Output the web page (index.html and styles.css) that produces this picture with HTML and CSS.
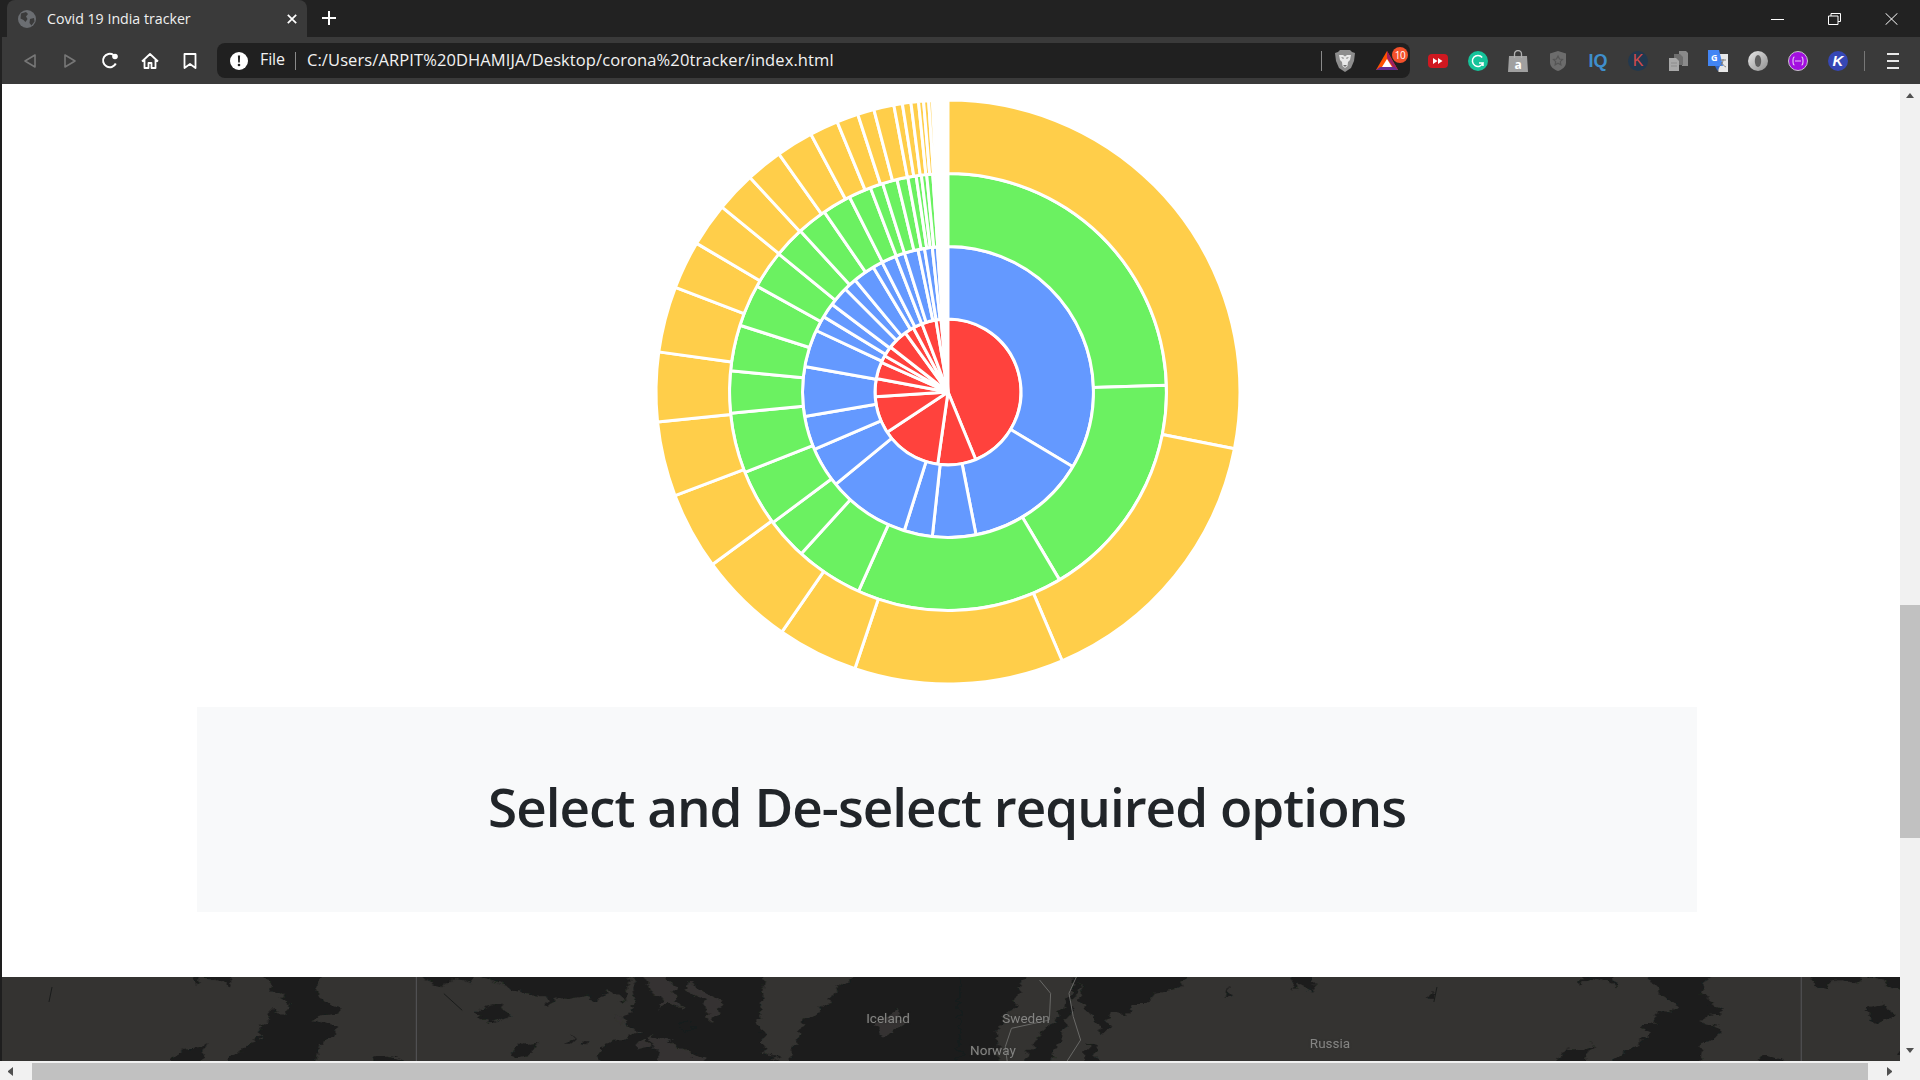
FILE: index.html
```html
<!DOCTYPE html>
<html lang="en">
<head>
<meta charset="utf-8">
<title>Covid 19 India tracker</title>
<link rel="stylesheet" href="styles.css">
</head>
<body>
<header class="chrome">
  <div class="tabstrip">
    <div class="tab">
      <svg class="favicon" viewBox="0 0 18 18"><circle cx="9" cy="9" r="9" fill="#6b6e72"/><path d="M3 3.5 8 2l2 2-2 2.5 1.5 2.5-2 3-2-2-3-1.5zM12 9l4-1 .5 3.5-3 4-2-2.5z" fill="#3b3b3b"/></svg>
      <span class="tab-title">Covid 19 India tracker</span>
      <svg class="tab-close" viewBox="0 0 10 10"><path d="M.8.8l8.4 8.4M9.2.8.8 9.2" stroke="#fff" stroke-width="1.7"/></svg>
    </div>
    <svg class="newtab" viewBox="0 0 14 14"><path d="M7 0v14M0 7h14" stroke="#fff" stroke-width="2"/></svg>
    <div class="winctl">
      <div class="winbtn"><svg viewBox="0 0 13 12" width="13" height="12"><path d="M0 6.5h13" stroke="#fff"/></svg></div>
      <div class="winbtn"><svg viewBox="0 0 13 12" width="13" height="12"><path d="M.5 3h9.5v8.500H.5zM3 3V.5h9.500V8.500H10" fill="none" stroke="#fff"/></svg></div>
      <div class="winbtn"><svg viewBox="0 0 13 12" width="13" height="12"><path d="M.5.2l12 11.600M12.500.2.500 11.800" stroke="#fff"/></svg></div>
    </div>
  </div>
  <div class="toolbar">
    <div class="nav"><svg viewBox="0 0 20 20" width="20" height="20"><path d="M15 4v12L5 10z" fill="none" stroke="#777" stroke-width="1.600" stroke-linejoin="round"/></svg></div>
    <div class="nav"><svg viewBox="0 0 20 20" width="20" height="20"><path d="M5 4v12l10-6z" fill="none" stroke="#777" stroke-width="1.600" stroke-linejoin="round"/></svg></div>
    <div class="nav"><svg viewBox="0 0 20 20" width="20" height="20"><path d="M15.800 12.500A6.700 6.700 0 1 1 13.500 4" fill="none" stroke="#fff" stroke-width="2"/><circle cx="15" cy="5.500" r="2.800" fill="#fff"/></svg></div>
    <div class="nav"><svg viewBox="0 0 20 20" width="20" height="20"><path d="M2 10.500 10 3l8 7.500M4.500 9v8h4v-5h3v5h4V9" fill="none" stroke="#fff" stroke-width="1.800" stroke-linejoin="round"/></svg></div>
    <div class="nav"><svg viewBox="0 0 20 20" width="20" height="20"><path d="M4.500 3h11v14L10 13l-5.500 4z" fill="none" stroke="#fff" stroke-width="1.800" stroke-linejoin="round"/></svg></div>
    <div class="omnibox">
      <svg class="info" viewBox="0 0 18 18"><circle cx="9" cy="9" r="9" fill="#fff"/><path d="M7.900 3.500h2.200l-.3 7H8.200z" fill="#202020"/><circle cx="9" cy="13" r="1.300" fill="#202020"/></svg>
      <span class="scheme">File</span>
      <span class="omni-sep"></span>
      <span class="url">C:/Users/ARPIT%20DHAMIJA/Desktop/corona%20tracker/index.html</span>
      <div class="omni-end">
        <span class="omni-sep end-sep"></span>
        <svg class="lion" viewBox="0 0 20 24"><path d="M5 1h10l2 2 3 1-1 8-3 7-6 4-6-4-3-7L0 4l3-1z" fill="#8d8d8d"/><path d="M4 6h4l2 1.500L12 6h4l-1 5-2 2-.5 4L10 19l-2.500-2L7 13l-2-2z" fill="#e8e8e8"/><path d="M6 8.500h2.500v1.500zM14 8.500h-2.500v1.500zM8 16h4l-2 2z" fill="#6a6a6a"/></svg>
        <div class="bat">
          <svg viewBox="0 0 24 22" width="24" height="22"><path d="M12 1 1 20h22z" fill="#ff5000"/><path d="M12 1v7l8 12h3z" fill="#9e1f63"/><path d="M1 20l4-3h14l4 3z" fill="#662d91"/><path d="M12 9l5 8H7z" fill="#fff"/></svg>
          <span class="badge">10</span>
        </div>
      </div>
    </div>
    <div class="ext-row">
      <div class="ext"><svg viewBox="0 0 20 16" width="20" height="16"><rect y="1" width="20" height="14" rx="4" fill="#cf1820"/><path d="M5 5l4.500 3L5 11zM10 5l4.500 3L10 11z" fill="#fff"/></svg></div>
      <div class="ext"><svg viewBox="0 0 20 20" width="20" height="20"><circle cx="10" cy="10" r="10" fill="#15c39a"/><path d="M14.200 6.500a5.500 5.500 0 1 0 .8 5.500h-4M15 12v3" fill="none" stroke="#fff" stroke-width="1.500"/></svg></div>
      <div class="ext"><svg viewBox="0 0 20 22" width="20" height="22"><path d="M1 6h18l1 16H0z" fill="#a0a0a0"/><path d="M6.500 8V4a3.500 3.500 0 0 1 7 0v4" fill="none" stroke="#b0b0b0" stroke-width="1.300"/><text x="10" y="19" class="bag-a">a</text></svg></div>
      <div class="ext"><svg viewBox="0 0 16 20" width="16" height="20"><path d="M8 0l8 2.500v9C16 16 12 18.500 8 20c-4-1.500-8-4-8-8.500v-9z" fill="#6c6c6c"/><path d="M8 5l1.500 3 3 .4-2.200 2.200.6 3.200L8 12.300l-2.900 1.500.6-3.200-2.200-2.200 3-.4z" fill="none" stroke="#555" stroke-width="1.200"/></svg></div>
      <div class="ext"><span class="iq">IQ</span></div>
      <div class="ext"><span class="circle-k">K</span></div>
      <div class="ext"><svg viewBox="0 0 20 20" width="20" height="20"><path d="M11 0h7l2 2v13h-6V6l-3-3z" fill="#8a8a8a"/><path d="M6 3h6l3 3v8H6z" fill="#6e6e6e"/><path d="M1 7h7l3 3v10H1z" fill="#a8a8a8"/><path d="M3 12h6M3 15h6" stroke="#8c8c8c"/></svg></div>
      <div class="ext"><svg viewBox="0 0 20 22" width="20" height="22"><path d="M9 4h11v18H10.500z" fill="#e8e8e8"/><path d="M0 0h11l4 16H0z" fill="#4285f4"/><path d="M7 16h5l-2.500 5z" fill="#3367c6"/><text x="3" y="11" class="tr-g">G</text><path d="M12 10h6M15 9v1c0 3-2 5-3 6M13 12c1 2 3 4 5 5" fill="none" stroke="#777" stroke-width=".9"/></svg></div>
      <div class="ext"><svg viewBox="0 0 20 20" width="20" height="20"><defs><linearGradient id="ring" x1="0" y1="0" x2="1" y2="1"><stop offset="0" stop-color="#e8e8e8"/><stop offset="1" stop-color="#8e8e8e"/></linearGradient></defs><circle cx="10" cy="10" r="10" fill="url(#ring)"/><ellipse cx="10" cy="10" rx="3.200" ry="6" fill="#5f5f5f"/></svg></div>
      <div class="ext"><svg viewBox="0 0 20 20" width="20" height="20"><circle cx="10" cy="10" r="9.500" fill="#a30fe0" stroke="#c9c4cc"/><path d="M6.500 6C5 6 5 7.500 5 10s0 4 1.500 4M13.500 6C15 6 15 7.500 15 10s0 4-1.500 4" fill="none" stroke="#e9d0f5" stroke-width="1.100"/><path d="M7.500 10h1M9.500 10h1M11.500 10h1" stroke="#fff" stroke-width="1.400"/></svg></div>
      <div class="ext"><span class="blue-k">K</span></div>
    </div>
    <span class="tool-sep"></span>
    <div class="menu"><span></span><span></span><span></span></div>
  </div>
</header>

<div class="viewport">
  <main class="page">
    <section class="chart-row"><canvas id="sunburst" width="640" height="623"></canvas></section>
    <section class="panel"><h1>Select and De-select required options</h1></section>
    <section class="map">
      <svg class="map-art" viewBox="0 0 3136 252" preserveAspectRatio="none">
        <defs>
          <filter id="coast" filterUnits="userSpaceOnUse" x="-40" y="-40" width="3216" height="332">
            <feTurbulence type="fractalNoise" baseFrequency="0.035 0.05" numOctaves="3" seed="7"/>
            <feDisplacementMap in="SourceGraphic" scale="26" xChannelSelector="R" yChannelSelector="G"/>
          </filter>
          <g id="canada">
            <path class="water" d="M318-30l2 58 10-26 35 12 10 14 10-58zM418-30l32 78 25 32-5 30-25-10-5 40-20 5 10 30-25 30-35 47v30h145v-30l5-52 25-20 5-30-40-20 15-15 20-5 8-15-18-15-20-40 25-70zM280 282v-30l15-33 30-5 15-15-10 40-10 43zM610 282v-30l10-18 30 10 5 8v30zM690-30v30l15 24 15 10 10-20 15-5 25 8 10-47zM790-30v30l60 44 40 15 5 40 10-35 20 5 35-10 15 15 15-35 30 35 10-104zM780 99l35-20 15 40-30 20zM835 240l15-40 30-5-20 40-10 5zM925 200l10-25v25zM950 192l8 16-10-4z"/>
            <path class="water" d="M1030-30l10 109-15 30-5 30 30 25-50 25-20 30-8 63h303v-30l-25-22-10-100 10-160z"/>
            <path class="land" d="M1045-30l20 80 15 10-5 40 20-30 20 30-15-60-20-70zM1125 10l55 70-20 60-10-70-30-30zM1060 170l40 30 55 52v30h-75zM1040 215l15-30 10 20zM1005 115l15 5-10 25z"/>
            <path class="water" d="M1110 140l18-8 5 25-15 5z"/>
          </g>
        </defs>
        <path class="land" d="M0 0h3136v252H0z"/>
        <g filter="url(#coast)">
          <use href="#canada"/>
          <use href="#canada" x="2262"/>
          <path class="water" d="M1290 282v-38l20-105 40-60 15-40 45-69h190v312z"/>
          <path class="water" d="M1568-30h118l-18 49-10 60-30 80 5 123h-65z"/>
          <path class="water" d="M1673 282v-30l22-70 30-50 20-70 10-92h12l-14 120-20 80-20 112zM1758-30h190l-25 66-35 8-20 40h-20l-5 30-30-5-5 50-10 10-30-90zM1773 282v-80l15 10 8 70zM2112-30l-2 55 6 15 5-20 25 25-5-75zM2330 65l8-20 10 5-8 15zM2005 30l5 28-8 5z"/>
          <path class="land" d="M1430 139l35-40 15 40-35 40z"/>
        </g>
        <path class="thin" d="M85 30l-5 45M725 50l30 50M2347 30l-5 45"/>
        <path class="line" d="M680 0v252M2942 0v252"/>
        <path class="border" d="M1698 9l18 40-2 80-62 25-10 55 3 43M1758 0l-12 49 7 70 12 70-22 63"/>
      </svg>
      <span class="map-label l-iceland">Iceland</span>
      <span class="map-label l-sweden">Sweden</span>
      <span class="map-label l-norway">Norway</span>
      <span class="map-label l-russia">Russia</span>
    </section>
  </main>
  <aside class="vscroll">
    <span class="arrow-up"></span>
    <div class="vtrack"><div class="vthumb"></div></div>
    <span class="arrow-down"></span>
  </aside>
</div>
<footer class="hscroll">
  <span class="arrow-left"></span>
  <div class="hthumb"></div>
  <span class="arrow-right"></span>
  <div class="corner"></div>
</footer>
<script src="script.js"></script>
</body>
</html>
```
FILE: styles.css
```css
* { box-sizing: border-box; }
html, body { margin: 0; height: 100%; overflow: hidden; }
body { display: flex; flex-direction: column; width: 1920px; height: 1080px; background: #fff; font-family: "Open Sans", "Noto Sans", sans-serif; }

.chrome { flex: none; background: #222; }
.tabstrip { height: 37px; display: flex; align-items: flex-end; padding-left: 7px; position: relative; }
.tab { width: 300px; height: 37px; background: #3a3a3a; border-radius: 8px 8px 0 0; display: flex; align-items: center; padding: 0 10px 0 11px; }
.favicon { width: 18px; height: 18px; flex: none; }
.tab-title { margin-left: 11px; color: #f0f0f0; font-size: 14.2px; flex: 1; white-space: nowrap; padding-bottom: 1px; }
.tab-close { width: 10px; height: 10px; flex: none; margin-right: 0; }
.newtab { width: 14px; height: 14px; margin: 0 0 12px 15px; flex: none; }
.winctl { margin-left: auto; display: flex; align-self: flex-start; }
.winbtn { width: 57px; height: 37px; display: flex; align-items: center; justify-content: center; }

.toolbar { height: 47px; margin-left: 2px; background: #3a3a3a; display: flex; align-items: center; padding-left: 8px; }
.nav { width: 40px; height: 40px; flex: none; display: flex; align-items: center; justify-content: center; }
.omnibox { width: 1193px; height: 35px; margin-left: 7px; flex: none; background: #202020; border-radius: 8px; display: flex; align-items: center; padding-left: 13px; color: #f2f2f2; }
.info { width: 18px; height: 18px; flex: none; }
.scheme { margin-left: 12px; font-size: 16px; padding-bottom: 3px; letter-spacing: -.1px; }
.omni-sep { width: 1px; height: 18px; background: #8a8a8a; margin: 0 11px 0 10px; flex: none; }
.url { font-size: 16.5px; white-space: nowrap; letter-spacing: .1px; padding-bottom: 3px; }
.omni-end { margin-left: auto; display: flex; align-items: center; width: 92px; flex: none; height: 100%; }
.end-sep { margin: 0 13px 0 3px; height: 20px; }
.lion { width: 20px; height: 24px; flex: none; }
.bat { position: relative; width: 24px; height: 22px; margin-left: 20px; flex: none; }
.badge { position: absolute; left: 17px; top: -3px; width: 16px; height: 16px; border-radius: 50%; background: #f5512b; color: #fff; font-size: 10px; line-height: 16px; text-align: center; letter-spacing: -.4px; }

.ext-row { display: flex; margin-left: 8px; flex: none; }
.ext { width: 40px; height: 40px; display: flex; align-items: center; justify-content: center; flex: none; }
.bag-a { font: 700 12px "Open Sans", sans-serif; fill: #fff; text-anchor: middle; }
.tr-g { font: 700 9px "Open Sans", sans-serif; fill: #fff; }
.iq { color: #3f8fcc; font: 700 18px/1 "Liberation Sans", sans-serif; }
.circle-k { width: 20px; height: 20px; border-radius: 50%; background: #22384e; color: #d04a4c; font: 400 16px/20px "Liberation Sans", sans-serif; text-align: center; }
.blue-k { width: 20px; height: 20px; border-radius: 50%; background: #3647b5; color: #fff; font: italic 700 15px/20px "Liberation Sans", sans-serif; text-align: center; }
.tool-sep { width: 1px; height: 20px; background: #777; margin-left: 6px; flex: none; }
.menu { margin-left: 22px; width: 12px; display: flex; flex-direction: column; gap: 5px; flex: none; }
.menu span { height: 2px; background: #e8e8e8; }

.viewport { flex: 1; min-height: 0; display: flex; }
.page { flex: 1; min-width: 0; border-left: 2px solid #1e1e1e; display: flex; flex-direction: column; align-items: flex-start; }
.chart-row { width: 1500px; margin-left: 195px; display: flex; justify-content: center; flex: none; }
#sunburst { display: block; width: 640px; height: 623px; }
.panel { width: 1500px; height: 205px; margin-left: 195px; padding-bottom: 6px; background: #f8f9fa; display: flex; align-items: center; justify-content: center; flex: none; }
.panel h1 { margin: 0; font-size: 53px; font-weight: 600; color: #212529; line-height: 1.2; letter-spacing: -.98px; white-space: nowrap; }

.map { width: 100%; height: 84px; margin-top: 65px; position: relative; overflow: hidden; flex: none; background: #343331; }
.map-art { display: block; width: 1920px; height: 84px; margin-left: -2px; }
.map-art .land { fill: #343331; }
.map-art .water { fill: #1a1c1b; }
.map-art .line { stroke: #57575a; stroke-width: 1; fill: none; vector-effect: non-scaling-stroke; }
.map-art .border { stroke: #6a6a68; stroke-width: 1; fill: none; vector-effect: non-scaling-stroke; }
.map-art .thin { stroke: #1a1c1b; stroke-width: 1; fill: none; vector-effect: non-scaling-stroke; }
.map-label { position: absolute; transform: translate(-50%, -50%); color: #858583; font: 400 13.5px/1 Roboto, sans-serif; text-shadow: 0 0 2px #333; }
.l-iceland { left: 886px; top: 42px; }
.l-sweden { left: 1024px; top: 42px; }
.l-norway { left: 991px; top: 74px; }
.l-russia { left: 1328px; top: 67px; }

.vscroll { width: 20px; flex: none; background: #f1f1f1; display: flex; flex-direction: column; align-items: center; }
.vtrack { flex: 1; width: 100%; padding-top: 507px; }
.vthumb { height: 233px; background: #c1c1c1; }
.arrow-up { margin: 9px 0 0; border: 4px solid transparent; border-top: 0; border-bottom: 5px solid #505050; }
.arrow-down { margin: 0 0 8px; border: 4px solid transparent; border-bottom: 0; border-top: 5px solid #505050; }

.hscroll { flex: none; height: 19px; background: #f1f1f1; display: flex; align-items: stretch; padding-top: 2px; }
.arrow-left { flex: none; width: 0; height: 9px; margin: 4px 16px 0 8px; border: 4.500px solid transparent; border-left: 0; border-right: 5px solid #505050; }
.hthumb { width: 1836px; background: #c1c1c1; flex: none; margin-left: 3px; }
.arrow-right { flex: none; width: 0; height: 9px; margin: 4px 0 0 19px; border: 4.500px solid transparent; border-right: 0; border-left: 5px solid #505050; }
.corner { flex: 1; }
```
FILE: script.js
```js
var rings = [
  { color: "#ff423d", inner: 0, outer: 73, stops: [157.7,188.1,236.5,266.3,280.7,294,299.8,308,324.2,331.6,339.1,350.5,354.5,356.6] },
  { color: "#6499ff", inner: 73, outer: 145.5, stops: [120.9,168.9,186.2,197.5,230.6,246.8,260.3,280.1,295,301.2,307.1,315.1,320.3,329.1,333.1,338.9,342.6,348.1,350.7,353.8,355.8,356.7] },
  { color: "#6bf161", inner: 145.5, outer: 218.5, stops: [88.2,149.3,204.2,222.2,233.3,248.4,264.4,275.6,287.8,299,309.2,317.5,325.5,333.2,339.2,342.6,346.5,349.4,351.6,353,354.4,356,356.8] },
  { color: "#ffce4a", inner: 218.5, outer: 292, stops: [101.2,157,198.6,214.7,233.8,249.2,264.1,277.9,291,300.6,309.3,317.3,324.6,332,337.7,342,345.3,349.3,351,352.7,354.2,355.2,356.2,356.9] }
];
var canvas = document.getElementById("sunburst");
var ctx = canvas.getContext("2d");
var cx = 321, cy = 308;
function rad(deg) { return (deg - 90) * Math.PI / 180; }
rings.forEach(function (ring) {
  var from = 0;
  ring.stops.forEach(function (to) {
    ctx.beginPath();
    ctx.arc(cx, cy, ring.outer, rad(from), rad(to));
    if (ring.inner > 0) { ctx.arc(cx, cy, ring.inner, rad(to), rad(from), true); }
    else { ctx.lineTo(cx, cy); }
    ctx.closePath();
    ctx.fillStyle = ring.color;
    ctx.fill();
    ctx.strokeStyle = "#fff";
    ctx.lineWidth = 3;
    ctx.lineJoin = "bevel";
    ctx.stroke();
    from = to;
  });
});
```
